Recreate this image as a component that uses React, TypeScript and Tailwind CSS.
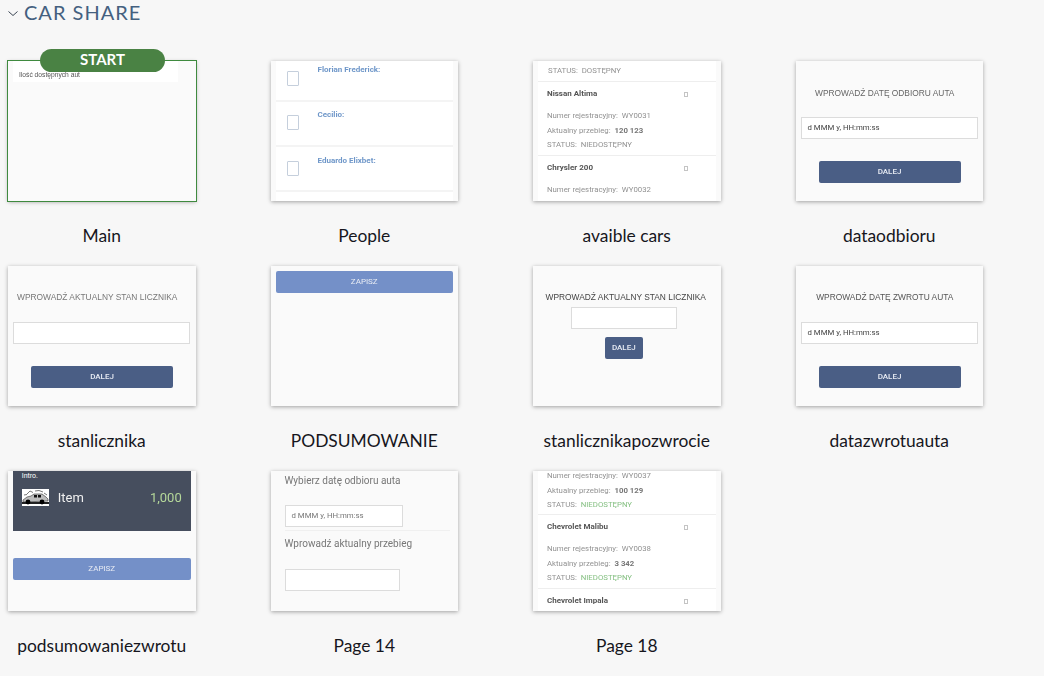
import React from "react";

const shot = "relative h-[140px] w-[187.5px] overflow-hidden bg-[#fafafa] shadow-[0_1px_4px_rgba(0,0,0,0.35)] font-['Roboto',sans-serif]";
const soft = "blur-[0.3px]";
const crisp = "blur-[0.15px]";

function Button({ text, className }: { text: string; className: string }) {
  return (
    <div className={`flex items-center justify-center rounded-[2px] text-[8px] text-[#e8ecf4] ${className}`}>
      {text}
    </div>
  );
}

function Field({ text, className }: { text?: string; className: string }) {
  return (
    <div className={`flex items-center border border-[#dcdcdc] bg-white pl-[6px] text-[7.8px] text-[#444] ${className}`}>
      {text}
    </div>
  );
}

function Tile({ label, children, start }: { label: string; children: React.ReactNode; start?: boolean }) {
  return (
    <div className="flex w-[187.5px] flex-col items-center">
      <div className="relative h-[140px] w-[187.5px]">
        {start ? (
          <div className="absolute -left-px -top-[12px] z-10 flex h-[23px] w-[125px] translate-x-[33px] items-center justify-center rounded-full bg-[#4a8244] pb-[3px] text-[15px] font-bold text-white font-['Lato',sans-serif]">
            START
          </div>
        ) : null}
        <div className={start ? `${shot} outline outline-1 outline-[#3f8a3f]` : shot}>{children}</div>
      </div>
      <div className="mt-[23px] h-[24px] whitespace-nowrap text-center text-[17.4px] leading-[24px] text-[#16161d] font-['Lato',sans-serif]">
        {label}
      </div>
    </div>
  );
}

function Person({ name, h, top, nameTop }: { name: string; h: string; top: string; nameTop: string }) {
  return (
    <div className={`flex border-b-2 border-[#f4f4f4] bg-white ${h}`}>
      <div className={`ml-[11px] h-[15px] w-[12px] rounded-[1px] border border-[#c5cfdc] bg-white ${top}`}></div>
      <div className={`ml-[19px] text-[8px] font-bold leading-[11px] text-[#6f97c9] ${nameTop}`}>{name}</div>
    </div>
  );
}

function CarSquare() {
  return <div className="h-[5px] w-[4px] border border-[#c4c4c4]"></div>;
}

function CarTitle({ name }: { name: string }) {
  return (
    <div className="flex h-[24px] items-center justify-between pl-[9px] pr-[28px] text-[8px] font-bold text-[#555]">
      <span>{name}</span>
      <CarSquare />
    </div>
  );
}

function CarInfo({ reg, km, status, green }: { reg: string; km?: string; status?: string; green?: boolean }) {
  return (
    <div className="flex flex-col gap-[4.5px] pl-[9px] text-[7.8px] leading-[10px] text-[#929292]">
      <div>Numer rejestracyjny:&nbsp; {reg}</div>
      {km ? (
        <div>
          Aktualny przebieg:&nbsp; <span className="font-bold text-[#777]">{km}</span>
        </div>
      ) : null}
      {status ? (
        <div>
          STATUS:&nbsp; <span className={green ? "text-[#86c083]" : ""}>{status}</span>
        </div>
      ) : null}
    </div>
  );
}

function CarList({ children }: { children: React.ReactNode }) {
  return <div className={`mx-[5px] h-[140px] overflow-hidden bg-white ${soft}`}>{children}</div>;
}

function FormScreen({ title, value, tone, blur, titleTop, fieldTop }: { title: string; value?: string; tone: string; blur: string; titleTop: string; fieldTop: string }) {
  return (
    <div className={`flex h-full flex-col ${blur}`}>
      <div className={`whitespace-nowrap pr-[9px] text-center text-[8.4px] leading-[12px] font-['Liberation_Sans',sans-serif] ${titleTop} ${tone}`}>{title}</div>
      <Field text={value} className={`ml-[5px] h-[22px] w-[177px] ${fieldTop}`} />
      <Button text="DALEJ" className="ml-[23px] mt-[22px] h-[22px] w-[142px] bg-[#4a5e85] font-medium" />
    </div>
  );
}

function CarThumb() {
  return (
    <svg viewBox="0 0 27 17" className="h-[17px] w-[27px] shrink-0 bg-white">
      <path d="M1 11 L5 8 L9 7 L12 5 L20 5 L24 8 L26 10 L26 12 L1 13 Z" fill="#bdbdbd" stroke="#333" strokeWidth="0.6" />
      <path d="M0 13 H27 V15 H0 Z" fill="#222" />
      <rect x="12" y="6" width="3" height="2.5" fill="#111" />
      <rect x="16" y="6" width="3" height="2.5" fill="#111" />
      <circle cx="6" cy="13" r="2.4" fill="#000" />
      <circle cx="20" cy="13" r="2.4" fill="#000" />
      <path d="M5 5 L8 2 L11 3.5 M13 2 L17 1.5 L21 3 M2 6 L5 5.5 M22 4 L25 6" stroke="#555" strokeWidth="0.8" fill="none" />
    </svg>
  );
}

export default function App() {
  return (
    <div className="h-[676px] w-[1044px] overflow-hidden bg-[#f7f7f7]">
      <div className="flex h-[60px] items-start pl-[8px]">
        <svg viewBox="0 0 10 5" className="mt-[11px] h-[5px] w-[10px]" fill="none" stroke="#3b4654" strokeWidth="1">
          <path d="M0.5 0.5 L5 4.5 L9.5 0.5" />
        </svg>
        <div className="ml-[6px] text-[20px] leading-[25px] tracking-[1px] text-[#44607f] font-['Lato',sans-serif]">CAR SHARE</div>
      </div>
      <div className="mt-px grid grid-cols-[187.5px_187.5px_187.5px_187.5px] gap-x-[75px] gap-y-[18px] pl-[8px]">
        <Tile label="Main" start>
          <div className={`mx-[5px] flex h-[21px] w-[165px] items-end bg-white pb-[3px] pl-[6px] text-[6.7px] leading-[8px] text-[#555] font-['Liberation_Sans',sans-serif] ${soft}`}>
            Ilość dostępnych aut
          </div>
        </Tile>
        <Tile label="People">
          <div className={`mx-[5px] ${soft}`}>
            <Person name="Florian Frederick:" h="h-[41px]" top="mt-[10px]" nameTop="mt-[3px]" />
            <Person name="Cecilio:" h="h-[45px]" top="mt-[13px]" nameTop="mt-[7px]" />
            <Person name="Eduardo Elixbet:" h="h-[45px]" top="mt-[14px]" nameTop="mt-[8px]" />
            <div className="h-[9px] bg-white"></div>
          </div>
        </Tile>
        <Tile label="avaible cars">
          <CarList>
            <div className="flex h-[21px] items-start border-b border-[#eeeeee] pl-[10px] pt-[5px] text-[7.8px] leading-[10px] text-[#929292]">STATUS:&nbsp; DOSTĘPNY</div>
            <CarTitle name="Nissan Altima" />
            <div className="h-[5px]"></div>
            <div className="h-[45px] border-b border-[#eeeeee]"><CarInfo reg="WY0031" km="120 123" status="NIEDOSTĘPNY" /></div>
            <CarTitle name="Chrysler 200" />
            <div className="h-[5px]"></div>
            <CarInfo reg="WY0032" />
          </CarList>
        </Tile>
        <Tile label="dataodbioru">
          <FormScreen title="WPROWADŹ DATĘ ODBIORU AUTA" value="d MMM y, HH:mm:ss" titleTop="mt-[26px]" fieldTop="mt-[18px]" tone="text-[#666]" blur={soft} />
        </Tile>

        <Tile label="stanlicznika">
          <FormScreen title="WPROWADŹ AKTUALNY STAN LICZNIKA" titleTop="mt-[25px]" fieldTop="mt-[19px]" tone="text-[#777]" blur={soft} />
        </Tile>
        <Tile label="PODSUMOWANIE">
          <div className={`flex justify-center pt-[5px] ${soft}`}>
            <Button text="ZAPISZ" className="h-[22px] w-[177px] bg-[#7490c8]" />
          </div>
        </Tile>
        <Tile label="stanlicznikapozwrocie">
          <div className={`flex h-full flex-col items-center pr-[6px] ${crisp}`}>
            <div className="ml-[4px] mt-[25px] whitespace-nowrap text-[8.4px] leading-[12px] text-[#444] font-['Liberation_Sans',sans-serif]">WPROWADŹ AKTUALNY STAN LICZNIKA</div>
            <Field className="mt-[4px] h-[22px] w-[106px]" />
            <Button text="DALEJ" className="mt-[8px] h-[22px] w-[38px] bg-[#4a5e85] font-medium" />
          </div>
        </Tile>
        <Tile label="datazwrotuauta">
          <div className={crisp}>
            <FormScreen title="WPROWADŹ DATĘ ZWROTU AUTA" value="d MMM y, HH:mm:ss" titleTop="mt-[25px]" fieldTop="mt-[19px]" tone="text-[#555]" blur="" />
          </div>
        </Tile>

        <Tile label="podsumowaniezwrotu">
          <div className={`flex flex-col items-center ${soft}`}>
            <div className="h-[60px] w-[178px] bg-[#464e5e] px-[9px] text-white">
              <div className="pt-[1px] text-[7px] leading-[9px]">Intro.</div>
              <div className="mt-[8px] flex items-center">
                <CarThumb />
                <span className="ml-[9px] text-[13px] leading-[17px] text-[#f0f0f0]">Item</span>
                <span className="ml-auto text-[13px] leading-[17px] text-[#b5d89a]">1,000</span>
              </div>
            </div>
            <Button text="ZAPISZ" className="mt-[27px] h-[22px] w-[178px] bg-[#7490c8]" />
          </div>
        </Tile>
        <Tile label="Page 14">
          <div className={`flex h-full flex-col pl-[14px] text-[10px] leading-[14px] text-[#777] ${soft}`}>
            <div className="mt-[3px]">Wybierz datę odbioru auta</div>
            <Field text="d MMM y, HH:mm:ss" className="mt-[17px] h-[22px] w-[118px] text-[#777]" />
            <div className="mt-[3px] h-px w-[165px] bg-[#f0f0f0]"></div>
            <div className="mt-[6px]">Wprowadź aktualny przebieg</div>
            <Field className="mt-[18px] h-[22px] w-[115px]" />
          </div>
        </Tile>
        <Tile label="Page 18">
          <CarList>
            <div className="h-[44px] border-b border-[#eeeeee]"><CarInfo reg="WY0037" km="100 129" status="NIEDOSTĘPNY" green /></div>
            <CarTitle name="Chevrolet Malibu" />
            <div className="h-[5px]"></div>
            <div className="h-[45px] border-b border-[#eeeeee]"><CarInfo reg="WY0038" km="3 342" status="NIEDOSTĘPNY" green /></div>
            <CarTitle name="Chevrolet Impala" />
          </CarList>
        </Tile>
      </div>
    </div>
  );
}
